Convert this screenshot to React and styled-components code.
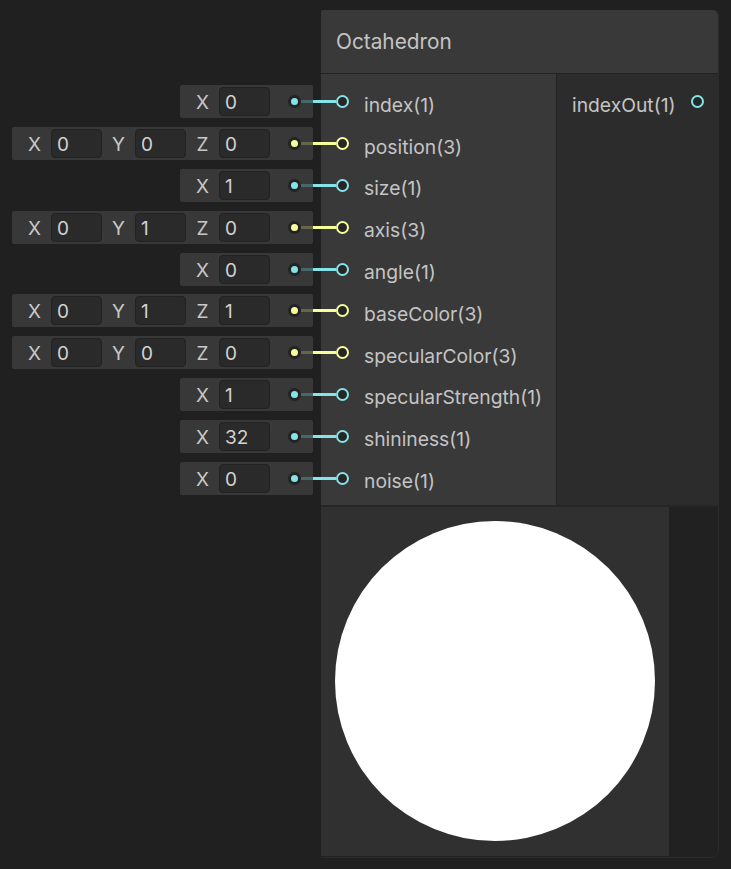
import React from 'react';
import styled, { createGlobalStyle } from 'styled-components';

const CYAN = '#84e4e7';
const CYAN_DIM = '#47686a';
const YELLOW = '#f6ff9a';
const YELLOW_DIM = '#65674a';
const ROW_H = 41.8;
const FONT = 'Inter, "Noto Sans", "Liberation Sans", sans-serif';

const inputs = [
    { name: 'index(1)', values: ['0'] },
    { name: 'position(3)', values: ['0', '0', '0'] },
    { name: 'size(1)', values: ['1'] },
    { name: 'axis(3)', values: ['0', '1', '0'] },
    { name: 'angle(1)', values: ['0'] },
    { name: 'baseColor(3)', values: ['0', '1', '1'] },
    { name: 'specularColor(3)', values: ['0', '0', '0'] },
    { name: 'specularStrength(1)', values: ['1'] },
    { name: 'shininess(1)', values: ['32'] },
    { name: 'noise(1)', values: ['0'] },
];
const AXES = ['X', 'Y', 'Z'];

let GlobalStyle = createGlobalStyle`
    html, body {
        margin: 0;
        padding: 0;
        background: #202020;
    }
    body {
        font-family: ${FONT};
    }
`
let Canvas = styled.div`
    display: flex;
    width: 731px;
    height: 869px;
    padding-top: 10px;
    box-sizing: border-box;
    background: #202020;
    overflow: hidden;
`
let FieldColumn = styled.div`
    width: 321px;
    padding-top: 71.1px;
    display: flex;
    flex-direction: column;
`
let FieldRow = styled.div`
    height: ${ROW_H}px;
    display: flex;
    align-items: center;
    justify-content: flex-end;
`
let FieldBox = styled.div`
    height: 33px;
    display: flex;
    align-items: center;
    padding-left: 6px;
    background: #383838;
    border-radius: 2px;
`
let AxisLabel = styled.span`
    width: 33px;
    text-align: center;
    font-size: 19px;
    color: #c8c8c8;
    padding-top: 2px;
`
let Field = styled.div`
    width: 51px;
    height: 29px;
    box-sizing: border-box;
    padding: 2px 0 0 5px;
    display: flex;
    align-items: center;
    background: #2a2a2a;
    border: 1px solid #222222;
    border-radius: 4px;
    font-size: 19px;
    color: #d2d2d2;
`
let DotSlot = styled.div`
    width: 43px;
    display: flex;
    align-items: center;
    padding-left: 18px;
    box-sizing: border-box;
`
let Dot = styled.div`
    width: 7px;
    height: 7px;
    border: 3px solid #232323;
    border-radius: 50%;
    background: ${p => p.$color};
    flex-shrink: 0;
`
let Line = styled.div`
    height: 3px;
    background: ${p => p.$color};
    width: ${p => (p.$width ? `${p.$width}px` : 'auto')};
    flex: ${p => (p.$width ? '0 0 auto' : '1')};
`
let Node = styled.div`
    width: 398px;
    height: 848px;
    display: flex;
    flex-direction: column;
    border-right: 1px solid #2b2b2b;
    border-bottom: 1px solid #2b2b2b;
    border-radius: 2px 6px 8px 0;
    overflow: hidden;
    box-sizing: border-box;
`
let Header = styled.div`
    height: 63px;
    flex-shrink: 0;
    display: flex;
    align-items: center;
    padding-left: 15px;
    background: #393939;
    border-bottom: 1px solid #232323;
    font-size: 20.8px;
    color: #c4c4c4;
`
let Body = styled.div`
    display: flex;
    flex-shrink: 0;
`
let InputList = styled.div`
    width: 235px;
    padding: 7px 0 6px;
    background: #393939;
    border-right: 1px solid #242424;
`
let OutputList = styled.div`
    flex: 1;
    padding-top: 7px;
    background: #2c2c2c;
`
let PortRow = styled.div`
    height: ${ROW_H}px;
    display: flex;
    align-items: center;
    font-size: 19.3px;
    color: #c4c4c4;
    white-space: nowrap;
`
let OutRow = styled(PortRow)`
    justify-content: space-between;
    padding: 0 14px 0 15px;
`
let PortName = styled.span`
    padding-top: 6px;
`
let Ring = styled.div`
    width: 13px;
    height: 13px;
    box-sizing: border-box;
    border: 2px solid ${p => p.$color};
    border-radius: 50%;
    background: #262626;
    flex-shrink: 0;
    margin-right: ${p => p.$gap || 0}px;
`
let PreviewArea = styled.div`
    flex: 1;
    display: flex;
    border-top: 2px solid #262626;
    background: #212121;
`
let Preview = styled.div`
    width: 348px;
    height: 349px;
    display: flex;
    align-items: center;
    justify-content: center;
    background: #303030;
`
let Sphere = styled.div`
    width: 320px;
    height: 320px;
    border-radius: 50%;
    background: #ffffff;
`

function colorFor(values) {
    return values.length === 3 ? [YELLOW, YELLOW_DIM] : [CYAN, CYAN_DIM];
}

function InputField({ values }) {
    let [bright, dim] = colorFor(values);
    return (
        <FieldRow>
            <FieldBox>
                {values.map((v, i) => (
                    <React.Fragment key={i}>
                        <AxisLabel>{AXES[i]}</AxisLabel>
                        <Field>{v}</Field>
                    </React.Fragment>
                ))}
                <DotSlot>
                    <Dot $color={bright} />
                    <Line $color={dim} />
                </DotSlot>
            </FieldBox>
            <Line $color={bright} $width={8} />
        </FieldRow>
    );
}

export default function App() {
    return (
        <Canvas>
            <GlobalStyle />
            <FieldColumn>
                {inputs.map(inp => <InputField key={inp.name} values={inp.values} />)}
            </FieldColumn>
            <Node>
                <Header>Octahedron</Header>
                <Body>
                    <InputList>
                        {inputs.map(inp => {
                            let [bright] = colorFor(inp.values);
                            return (
                                <PortRow key={inp.name}>
                                    <Line $color={bright} $width={15} />
                                    <Ring $color={bright} $gap={15} />
                                    <PortName>{inp.name}</PortName>
                                </PortRow>
                            );
                        })}
                    </InputList>
                    <OutputList>
                        <OutRow>
                            <PortName>indexOut(1)</PortName>
                            <Ring $color={CYAN} />
                        </OutRow>
                    </OutputList>
                </Body>
                <PreviewArea>
                    <Preview>
                        <Sphere />
                    </Preview>
                </PreviewArea>
            </Node>
        </Canvas>
    );
}
